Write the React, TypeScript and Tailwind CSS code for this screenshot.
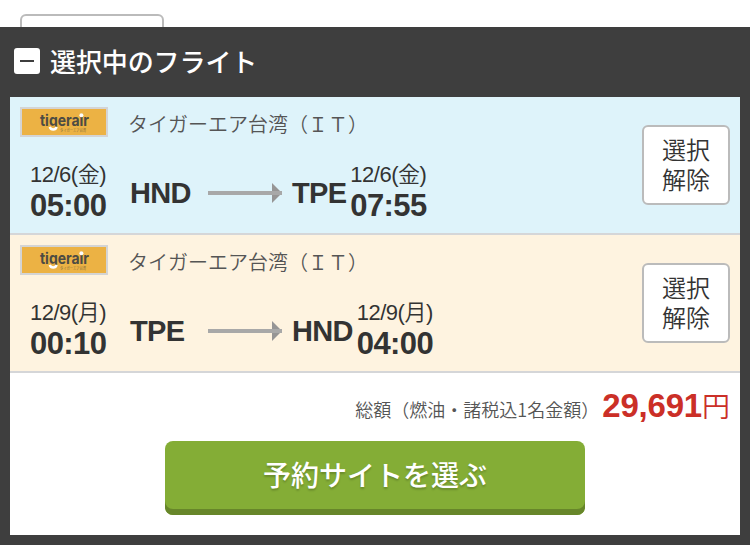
type Flight = {
  airline: string;
  from: { code: string; date: string; time: string };
  to: { code: string; date: string; time: string };
  rowClass: string;
};

const FLIGHTS: Flight[] = [
  {
    airline: "タイガーエア台湾（ＩＴ）",
    from: { code: "HND", date: "12/6(金)", time: "05:00" },
    to: { code: "TPE", date: "12/6(金)", time: "07:55" },
    rowClass: "bg-[#def3fa]",
  },
  {
    airline: "タイガーエア台湾（ＩＴ）",
    from: { code: "TPE", date: "12/9(月)", time: "00:10" },
    to: { code: "HND", date: "12/9(月)", time: "04:00" },
    rowClass: "bg-[#fef3e0]",
  },
];

function TigerairLogo() {
  return (
    <svg
      className="h-[30px] w-[88px] shrink-0 border-2 border-[#d4d4d4] bg-[#ecb244]"
      viewBox="0 0 84 26"
      fontFamily="Inter, 'Noto Sans CJK JP', sans-serif"
    >
      <text x="18" y="17.2" fontSize="15.5" fontWeight="700" fill="#4d4b43" textLength="49" lengthAdjust="spacingAndGlyphs">
        tigerair
      </text>
      <path d="M26 17.8h9v6h-9z" fill="#ecb244" />
      <path d="M27.8 17.9 A3.5 3.5 0 0 0 34.6 17.9" fill="none" stroke="#fff" strokeWidth="2.4" />
      <circle cx="59.4" cy="6.2" r="2" fill="#fff" />
      <text x="38" y="22.6" fontSize="4" fill="#7d6a3c" textLength="26" lengthAdjust="spacingAndGlyphs">
        タイガーエア台湾
      </text>
    </svg>
  );
}

function Arrow() {
  return (
    <svg className="mr-2.5 h-5 w-[74px] shrink-0" viewBox="0 0 74 20">
      <path d="M64 0l10 10l-10 10z" fill="#969595" />
      <path d="M0 8h74v4H0z" fill="#a8a8a8" />
    </svg>
  );
}

function Schedule({ date, time }: { date: string; time: string }) {
  return (
    <div className="w-[100px] shrink-0 pt-px">
      <div className="text-[22px] leading-[30px] font-[350] tracking-[-0.5px]">{date}</div>
      <div className="text-[31px] leading-[32px] font-bold tracking-[-0.6px]">{time}</div>
    </div>
  );
}

function FlightRow({ flight }: { flight: Flight }) {
  return (
    <li className={`flex h-[138px] border-b-2 border-[#d5d6d8] pr-2.5 pl-2.5 ${flight.rowClass}`}>
      <div className="flex-1">
        <div className="flex h-[62px] pt-2.5">
          <TigerairLogo />
          <div className="ml-5 text-[20px] leading-[33px] font-[350] text-[#555] [font-family:'Noto_Sans_CJK_JP',sans-serif]">
            {flight.airline}
          </div>
        </div>
        <div className="flex pl-2.5">
          <Schedule date={flight.from.date} time={flight.from.time} />
          <div className="mt-4 w-[78px] text-[29px] leading-[36px] font-bold tracking-[-0.7px]">{flight.from.code}</div>
          <div className="mt-6">
            <Arrow />
          </div>
          <div className="mt-4 mr-1 text-[29px] leading-[36px] font-bold tracking-[-0.7px]">{flight.to.code}</div>
          <Schedule date={flight.to.date} time={flight.to.time} />
        </div>
      </div>
      <button
        type="button"
        className="mt-7 h-20 w-[88px] rounded-[6px] border-2 border-[#bbb] bg-white pb-0.5 text-[24px] leading-[30px] font-[350] [font-family:'Noto_Sans_CJK_JP',sans-serif]"
      >
        選択
        <br />
        解除
      </button>
    </li>
  );
}

export default function App() {
  return (
    <div className="h-[545px] w-[750px] overflow-hidden bg-white text-[#333] [font-family:'Liberation_Sans','Noto_Sans_CJK_JP',sans-serif]">
      <div className="h-[27px] overflow-hidden pt-3.5 pl-5">
        <div className="h-10 w-36 rounded-[6px] border-2 border-[#bbb]" />
      </div>
      <section className="h-[518px] bg-[#3e3e3e] px-2.5">
        <h2 className="flex h-[70px] items-center pl-1 text-white">
          <span className="mb-0.5 flex h-[26px] w-[26px] items-center justify-center rounded-[3px] bg-white">
            <span className="h-0.5 w-3.5 bg-[#3e3e3e]" />
          </span>
          <span className="ml-2.5 pb-[3px] text-[26px] leading-[67px] font-medium tracking-[-0.1px] [font-family:'Noto_Sans_CJK_JP',sans-serif]">
            選択中のフライト
          </span>
        </h2>
        <div className="h-[438px] bg-white">
          <ul>
            {FLIGHTS.map((flight) => (
              <FlightRow key={flight.from.date} flight={flight} />
            ))}
          </ul>
          <div className="flex h-[68px] items-baseline justify-end pt-[13px] pr-2.5">
            <span className="mr-[3px] text-[18px] font-[350] text-[#555] [font-family:'Noto_Sans_CJK_JP',sans-serif]">
              総額（燃油・諸税込1名金額）
            </span>
            <span className="text-[33px] leading-[40px] font-bold tracking-[-0.2px] text-[#cb2f27]">29,691</span>
            <span className="text-[28px] leading-[40px] font-[350] text-[#cb2f27]">円</span>
          </div>
          <button
            type="button"
            className="mx-auto block h-[74px] w-[420px] rounded-[8px] bg-[#84ad36] pb-2 text-[28px] leading-[66px] font-medium text-white shadow-[inset_0_-6px_0_#67862a] [font-family:'Noto_Sans_CJK_JP',sans-serif] text-shadow-[0_2px_2px_rgb(0_0_0/0.2)]"
          >
            予約サイトを選ぶ
          </button>
        </div>
      </section>
    </div>
  );
}
